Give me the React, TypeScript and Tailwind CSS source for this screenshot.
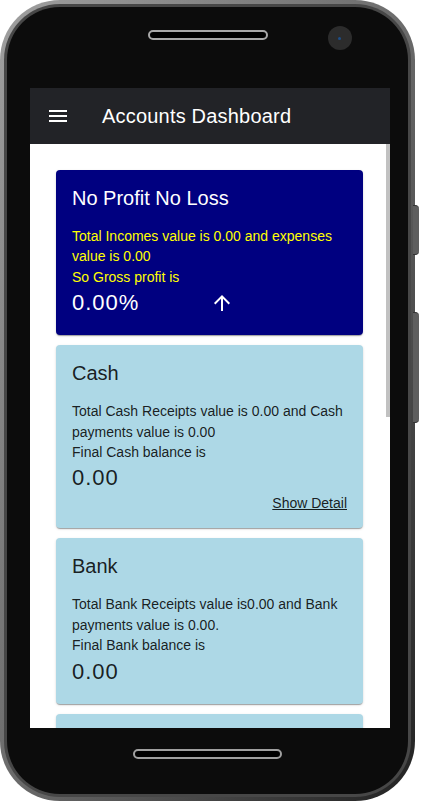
import React from 'react';

const shadow =
    'shadow-[0_2px_1px_-1px_rgba(0,0,0,0.2),0_1px_1px_0_rgba(0,0,0,0.14),0_1px_3px_0_rgba(0,0,0,0.12)]';

function ArrowUp() {
    return (
        <svg width="24" height="24" viewBox="0 0 24 24" fill="#ffffff">
            <path d="M4 12l1.41 1.41L11 7.83V20h2V7.83l5.58 5.59L20 12l-8-8-8 8z" />
        </svg>
    );
}

function MenuIcon() {
    return (
        <svg width="24" height="24" viewBox="0 0 24 24" fill="#ffffff">
            <path d="M3 18h18v-2H3v2zm0-5h18v-2H3v2zm0-7v2h18V6H3z" />
        </svg>
    );
}

type AccountCardProps = {
    title: string;
    lines: string[];
    amount: string;
    detail?: boolean;
};

function AccountCard({ title, lines, amount, detail }: AccountCardProps) {
    return (
        <div className={`bg-[#add8e6] rounded p-4 text-black/[0.87] ${shadow}`}>
            <h2 className="text-[20px] leading-[24px] font-normal">{title}</h2>
            <div className="mt-4 text-[14px] leading-[20.4px]">
                {lines.map((l) => (
                    <p key={l}>{l}</p>
                ))}
            </div>
            <p className="text-[22px] leading-[32px] tracking-[1px]">{amount}</p>
            {detail && (
                <div className="flex justify-end">
                    <a className="text-[14px] leading-[18px] underline cursor-pointer">Show Detail</a>
                </div>
            )}
        </div>
    );
}

export default function App(): React.ReactElement {
    return (
        <div className="w-[421px] h-[806px] bg-white overflow-hidden font-['Liberation_Sans',Arial,sans-serif]">
            <div className="relative w-[415px] h-[801px]">
                {/* side buttons */}
                <div className="absolute left-[413px] top-[205px] w-[6px] h-[50px] rounded-r-sm bg-[#5e5e5e] border-y border-[#333]" />
                <div className="absolute left-[413px] top-[312px] w-[6px] h-[111px] rounded-r-sm bg-[#5e5e5e] border-y border-[#333]" />

                <div className="h-full rounded-[60px] bg-gradient-to-br from-[#a0a0a0] via-[#6c6c6c] to-[#222222] p-[4px]">
                    <div className="h-full rounded-[56px] bg-[#474747] p-[3px]">
                        <div className="h-full rounded-[53px] bg-[#0c0c0c] flex flex-col">
                            <div className="h-[81px] grid grid-cols-[1fr_120px_1fr] items-start">
                                <div />
                                <div className="mt-[23px] h-[10px] rounded-full border-2 border-[#a8a8a8] bg-black" />
                                <div className="mt-[19px] ml-[60px] w-[24px] h-[24px] rounded-full bg-[#2c2c2c] flex items-center justify-center">
                                    <div className="w-[3px] h-[3px] rounded-full bg-[#1d4f8a]" />
                                </div>
                            </div>

                            <div className="ml-[23px] w-[360px] h-[640px] bg-white flex flex-col overflow-hidden">
                                <header className="h-[56px] shrink-0 bg-[#222327] flex items-center pl-4 text-white">
                                    <MenuIcon />
                                    <h1 className="ml-8 text-[20px] leading-[23px] font-normal tracking-[0.2px]">
                                        Accounts Dashboard
                                    </h1>
                                </header>
                                <div className="flex flex-1 min-h-0">
                                    <div className="w-[356px] pl-[26px] pr-[23px] pt-[26px] flex flex-col gap-[10px] overflow-hidden">
                                        <div className={`bg-[#000080] rounded p-4 ${shadow}`}>
                                            <h2 className="text-white text-[20px] leading-[24px] font-normal">
                                                No Profit No Loss
                                            </h2>
                                            <div className="mt-4 text-[#ffff00] text-[14px] leading-[20.4px]">
                                                <p>Total Incomes value is 0.00 and expenses value is 0.00</p>
                                                <p>So Gross profit is</p>
                                            </div>
                                            <div className="grid grid-cols-2 items-center">
                                                <p className="text-white text-[22px] leading-[32px] tracking-[1px]">0.00%</p>
                                                <ArrowUp />
                                            </div>
                                        </div>
                                        <AccountCard
                                            title="Cash"
                                            lines={[
                                                'Total Cash Receipts value is 0.00 and Cash payments value is 0.00',
                                                'Final Cash balance is',
                                            ]}
                                            amount="0.00"
                                            detail
                                        />
                                        <AccountCard
                                            title="Bank"
                                            lines={[
                                                'Total Bank Receipts value is0.00 and Bank payments value is 0.00.',
                                                'Final Bank balance is',
                                            ]}
                                            amount="0.00"
                                        />
                                        <div className={`bg-[#add8e6] rounded h-[120px] shrink-0 ${shadow}`} />
                                    </div>
                                    <div className="w-[4px]">
                                        <div className="h-[273px] bg-[#c1c1c1]" />
                                    </div>
                                </div>
                            </div>

                            <div className="flex justify-center pt-[21px]">
                                <div className="w-[149px] h-[10px] rounded-full border-2 border-[#a0a0a0] bg-black" />
                            </div>
                        </div>
                    </div>
                </div>
            </div>
        </div>
    );
}
